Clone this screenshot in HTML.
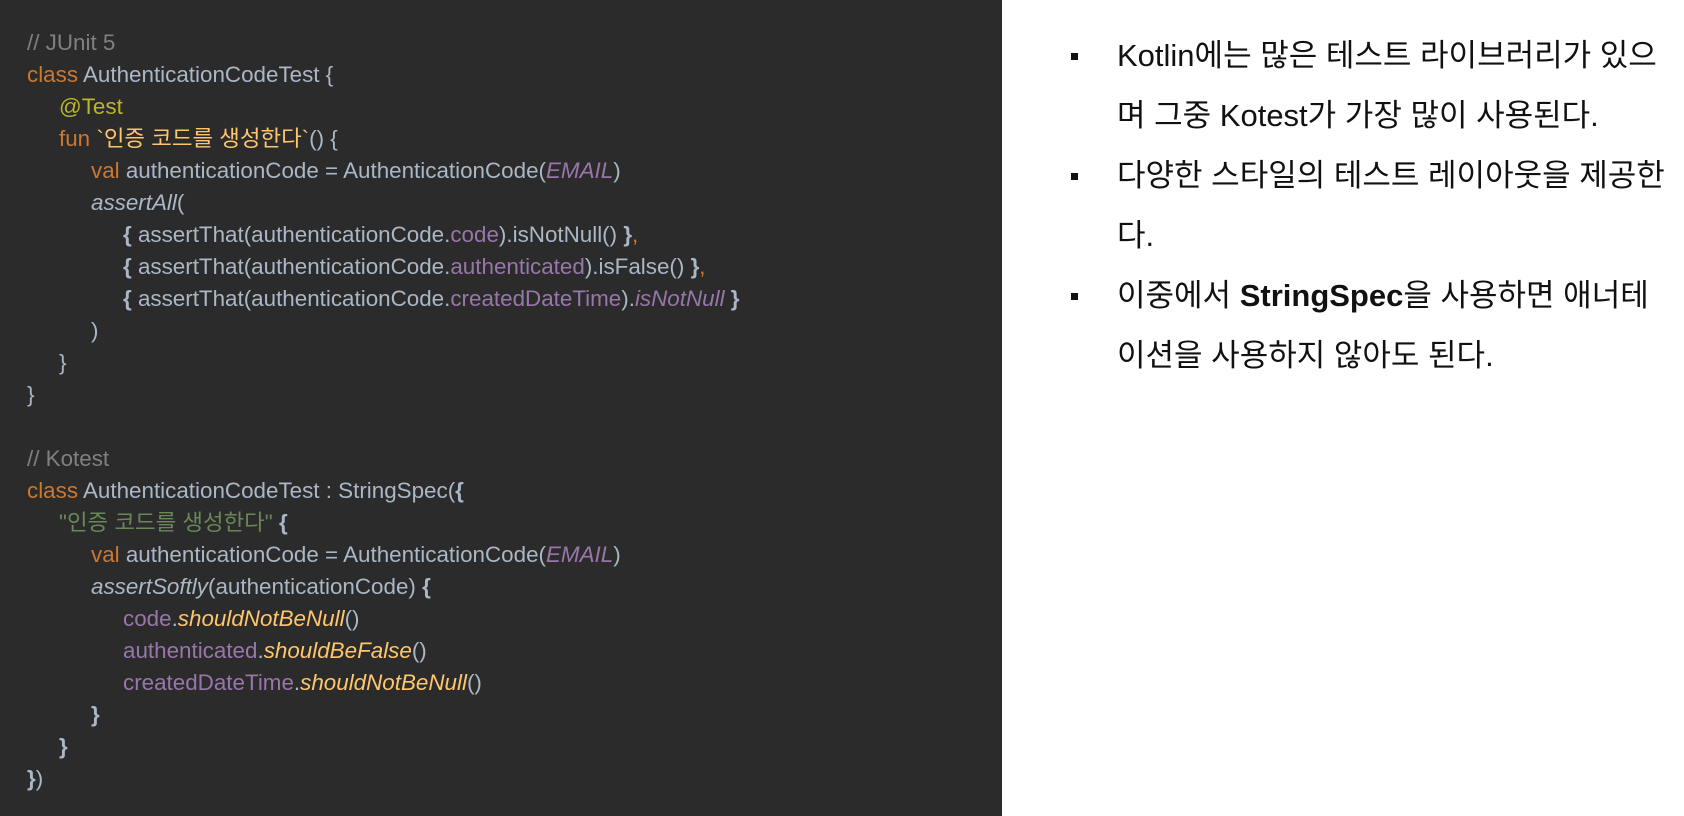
<!DOCTYPE html>
<html><head><meta charset="utf-8"><style>
html,body{margin:0;padding:0;width:1684px;height:816px;overflow:hidden;background:#fff}
.code{position:absolute;left:0;top:0;width:1002px;height:816px;background:#2b2b2b}
.pre{position:absolute;left:27px;top:27px;font-family:"Liberation Sans","Noto Sans CJK KR",sans-serif;font-size:22.4px;line-height:32px;color:#a9b7c6}
.pre div{height:32px;white-space:pre}
.l1{padding-left:32px}.l2{padding-left:64px}.l3{padding-left:96px}
.c{color:#808080}.k{color:#cc7832}.a{color:#bbb529}.f{color:#ffc66d}.p{color:#9876aa}.s{color:#6a8759}.i{font-style:italic}.b{font-weight:bold}
.r{position:absolute;left:1071px;top:26px;font-family:"Liberation Sans","Noto Sans CJK KR",sans-serif;font-size:31px;color:#111}
.li{position:relative;padding-left:46px;line-height:60px}
.li .d{position:absolute;left:0;top:27px;width:7px;height:7px;background:#111}
</style></head><body>
<div class="code"><div class="pre"><div><span class="c">// JUnit 5</span></div><div><span class="k">class</span> AuthenticationCodeTest {</div><div class="l1"><span class="a">@Test</span></div><div class="l1"><span class="k">fun</span> <span class="f">`인증 코드를 생성한다`</span>() {</div><div class="l2"><span class="k">val</span> authenticationCode = AuthenticationCode(<span class="p i">EMAIL</span>)</div><div class="l2"><span class="i">assertAll</span>(</div><div class="l3"><span class="b">{</span> assertThat(authenticationCode.<span class="p">code</span>).isNotNull() <span class="b">}</span><span class="k">,</span></div><div class="l3"><span class="b">{</span> assertThat(authenticationCode.<span class="p">authenticated</span>).isFalse() <span class="b">}</span><span class="k">,</span></div><div class="l3"><span class="b">{</span> assertThat(authenticationCode.<span class="p">createdDateTime</span>).<span class="p i">isNotNull</span> <span class="b">}</span></div><div class="l2">)</div><div class="l1">}</div><div>}</div><div></div><div><span class="c">// Kotest</span></div><div><span class="k">class</span> AuthenticationCodeTest : StringSpec(<span class="b">{</span></div><div class="l1"><span class="s">"인증 코드를 생성한다"</span> <span class="b">{</span></div><div class="l2"><span class="k">val</span> authenticationCode = AuthenticationCode(<span class="p i">EMAIL</span>)</div><div class="l2"><span class="i">assertSoftly</span>(authenticationCode) <span class="b">{</span></div><div class="l3"><span class="p">code</span>.<span class="f i">shouldNotBeNull</span>()</div><div class="l3"><span class="p">authenticated</span>.<span class="f i">shouldBeFalse</span>()</div><div class="l3"><span class="p">createdDateTime</span>.<span class="f i">shouldNotBeNull</span>()</div><div class="l2"><span class="b">}</span></div><div class="l1"><span class="b">}</span></div><div><span class="b">}</span>)</div></div></div>
<div class="r">
<div class="li"><span class="d"></span>Kotlin에는 많은 테스트 라이브러리가 있으<br>며 그중 Kotest가 가장 많이 사용된다.</div>
<div class="li"><span class="d"></span>다양한 스타일의 테스트 레이아웃을 제공한<br>다.</div>
<div class="li"><span class="d"></span>이중에서 <b>StringSpec</b>을 사용하면 애너테<br>이션을 사용하지 않아도 된다.</div>
</div>
</body></html>
